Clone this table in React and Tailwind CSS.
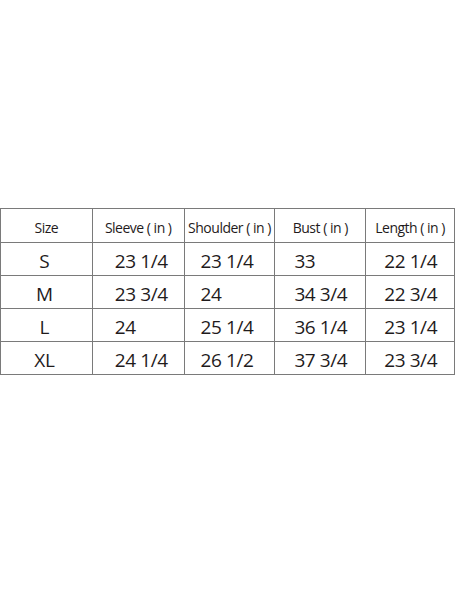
import React from 'react';

const headers = ['Size', 'Sleeve ( in )', 'Shoulder ( in )', 'Bust ( in )', 'Length ( in )'];

const rows = [
  ['S', '23 1/4', '23 1/4', '33', '22 1/4'],
  ['M', '23 3/4', '24', '34 3/4', '22 3/4'],
  ['L', '24', '25 1/4', '36 1/4', '23 1/4'],
  ['XL', '24 1/4', '26 1/2', '37 3/4', '23 3/4'],
];

const widths = ['w-[92px]', 'w-[92px]', 'w-[91px]', 'w-[91px]', 'w-[88px]'];
const pads = ['', 'pl-[22px]', 'pl-[16px]', 'pl-[19px]', 'pl-[18px]'];

const App = () => {
  return (
    <div className="w-[457px] h-[600px] bg-white pt-[208px] font-['Open_Sans',sans-serif] text-[#1f1b1c]">
      <div className="w-[455px] border border-[#7a7a7a]">
        <div className="flex h-[34px] border-b border-[#7a7a7a]">
          {headers.map((h, i) => (
            <div
              key={h}
              className={`${widths[i]} flex items-center justify-center pt-[4px] text-[14px] tracking-[-0.5px] whitespace-nowrap ${i < 4 ? 'border-r border-[#7a7a7a]' : ''}`}
            >
              {h}
            </div>
          ))}
        </div>
        {rows.map((r, ri) => (
          <div key={r[0]} className={`flex ${ri < 3 ? 'h-[33px] border-b border-[#7a7a7a]' : 'h-[32px]'}`}>
            {r.map((c, i) => (
              <div
                key={i}
                className={`${widths[i]} flex items-center pt-[5px] text-[19px] tracking-[-0.4px] whitespace-nowrap ${i === 0 ? 'justify-center pr-[4px]' : pads[i]} ${i < 4 ? 'border-r border-[#7a7a7a]' : ''}`}
              >
                {c}
              </div>
            ))}
          </div>
        ))}
      </div>
    </div>
  );
};

export default App;
